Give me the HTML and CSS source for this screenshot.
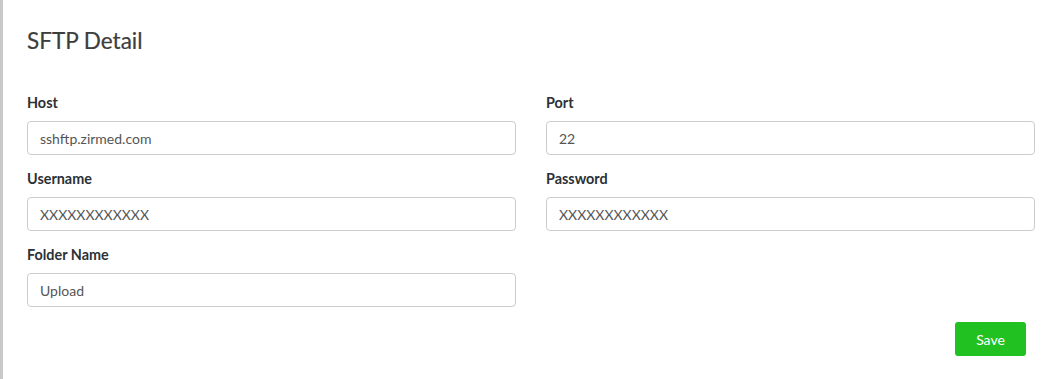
FILE: index.html
```html
<!DOCTYPE html>
<html lang="en">
<head>
  <meta charset="UTF-8" />
  <title>SFTP Detail</title>
  <meta name="viewport" content="width=device-width, initial-scale=1.0">
  <link rel="stylesheet" href="styles.css">
</head>
<body>

  <div class="panel">
    <h2 class="panel-title">SFTP Detail</h2>

    <form class="sftp-form">
      <div class="form-grid">
        <div class="field">
          <label for="host">Host</label>
          <input type="text" id="host" value="sshftp.zirmed.com">
        </div>
        <div class="field">
          <label for="port">Port</label>
          <input type="text" id="port" value="22">
        </div>
        <div class="field">
          <label for="username">Username</label>
          <input type="text" id="username" value="XXXXXXXXXXXX">
        </div>
        <div class="field">
          <label for="password">Password</label>
          <input type="text" id="password" value="XXXXXXXXXXXX">
        </div>
        <div class="field">
          <label for="folder">Folder Name</label>
          <input type="text" id="folder" value="Upload">
        </div>
      </div>

      <div class="actions">
        <button type="button" class="btn-save">Save</button>
      </div>
    </form>
  </div>

</body>
</html>
```

FILE: styles.css
```css
body {
  margin: 0;
  background: #fff;
  font-family: Lato, "Open Sans", sans-serif;
}
.panel {
  min-height: 379px;
  box-sizing: border-box;
  border-left: 3px solid #c9c9c9;
  padding: 26px 18px 0 24px;
}
.panel-title {
  margin: 0 0 38px;
  font-size: 22.5px;
  line-height: 29px;
  font-weight: 400;
  color: #3d3d3d;
  -webkit-text-stroke: 0.2px #3d3d3d;
}
.form-grid {
  display: grid;
  grid-template-columns: 1fr 1fr;
  column-gap: 30px;
}
.field {
  display: flex;
  flex-direction: column;
  margin-bottom: 14px;
}
.field label {
  font-size: 14.4px;
  line-height: 20px;
  font-weight: 700;
  color: #2b3136;
  margin-bottom: 8px;
}
.field input {
  height: 34px;
  box-sizing: border-box;
  padding: 0 12px;
  border: 1px solid #ccc;
  border-radius: 4px;
  font-family: Lato, "Open Sans", sans-serif;
  font-size: 14px;
  color: #555;
  background: #fff;
}
.actions {
  display: flex;
  justify-content: flex-end;
  padding-top: 1px;
  padding-right: 9px;
}
.btn-save {
  width: 71px;
  height: 34px;
  border: none;
  border-radius: 3px;
  background: #21c121;
  color: #fff;
  font-family: Lato, "Open Sans", sans-serif;
  font-size: 14px;
  cursor: pointer;
}
```
